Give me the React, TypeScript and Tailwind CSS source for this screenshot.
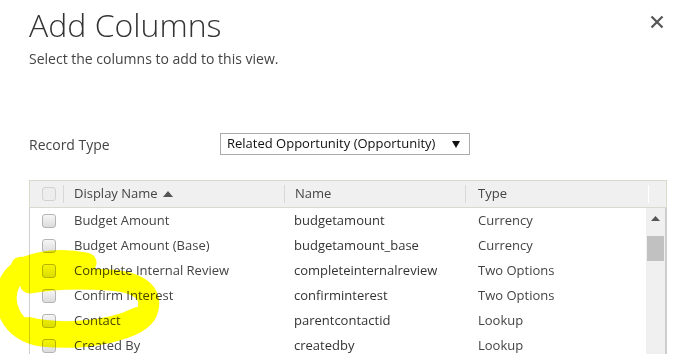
import React from "react";

type Row = { display: string; name: string; type: string };

const rows: Row[] = [
  { display: "Budget Amount", name: "budgetamount", type: "Currency" },
  { display: "Budget Amount (Base)", name: "budgetamount_base", type: "Currency" },
  { display: "Complete Internal Review", name: "completeinternalreview", type: "Two Options" },
  { display: "Confirm Interest", name: "confirminterest", type: "Two Options" },
  { display: "Contact", name: "parentcontactid", type: "Lookup" },
  { display: "Created By", name: "createdby", type: "Lookup" },
];

function Checkbox({ faded = false }: { faded?: boolean }) {
  return (
    <span
      className={`block h-[14px] w-[14px] rounded-[3px] border ${
        faded
          ? "border-[#d2d2d2] bg-[#ededed]"
          : "border-[#b4b4b4] bg-gradient-to-b from-[#f6f6f6] to-[#dcdcdc]"
      }`}
    />
  );
}

function Sep() {
  return <span className="h-[18px] w-px shrink-0 bg-[#d8d8d8]" />;
}

export default function App() {
  return (
    <div className="relative h-[354px] w-[697px] overflow-hidden bg-white font-['Open_Sans',sans-serif] text-[#444]">
      <div className="flex justify-between pl-[29px] pr-[33px]">
        <div>
          <h1 className="mt-[4px] text-[32px] font-light leading-[42px] text-[#333]">Add Columns</h1>
          <p className="mt-[3px] text-[14px] leading-[19px] text-[#444]">
            Select the columns to add to this view.
          </p>
        </div>
        <button className="mt-[15px] h-[14px] w-[14px]" aria-label="Close">
          <svg viewBox="0 0 14 14" className="h-[14px] w-[14px]">
            <path d="M1.5 1.5L12.5 12.5M12.5 1.5L1.5 12.5" stroke="#555" strokeWidth="2.2" />
          </svg>
        </button>
      </div>

      <div className="mt-[65px] flex items-center pl-[29px]">
        <span className="w-[191px] text-[14px]">Record Type</span>
        <div className="flex h-[22px] w-[250px] items-center justify-between border border-[#ababab] pl-[6px] pr-[9px] text-[13px] text-[#111]">
          <span>Related Opportunity (Opportunity)</span>
          <svg viewBox="0 0 8 7" className="h-[7px] w-[8px]">
            <path d="M0 0H8L4 7Z" fill="#111" />
          </svg>
        </div>
      </div>

      <div className="ml-[29px] mt-[25px] w-[638px]">
        <div className="flex h-[28px] items-center border border-[#d9d9cc] bg-[#f0f0f0] text-[13px]">
          <div className="flex w-[33px] items-center pl-[12px]">
            <Checkbox faded />
          </div>
          <Sep />
          <div className="flex w-[220px] items-center gap-[5px] pl-[10px]">
            <span>Display Name</span>
            <svg viewBox="0 0 10 6" className="h-[6px] w-[10px]">
              <path d="M0 6L5 0L10 6Z" fill="#555" />
            </svg>
          </div>
          <Sep />
          <div className="w-[180px] pl-[10px]">Name</div>
          <Sep />
          <div className="w-[182px] pl-[12px]">Type</div>
          <span className="h-[18px] w-px shrink-0 bg-white" />
        </div>

        <div className="flex border-l border-[#cfcfcf]">
          <div className="flex-1">
            {rows.map((r) => (
              <div key={r.name} className="flex h-[25px] items-center text-[13px]">
                <div className="w-[33px] pl-[12px]">
                  <Checkbox />
                </div>
                <div className="w-[221px] pl-[11px]">{r.display}</div>
                <div className="w-[181px] pl-[10px] text-[#333]">{r.name}</div>
                <div className="pl-[13px]">{r.type}</div>
              </div>
            ))}
          </div>
          <div className="flex w-[21px] flex-col items-center border-r-2 border-[#cdcdcd] bg-[#f0f0f0]">
            <svg viewBox="0 0 9 5" className="mt-[8px] h-[5px] w-[9px]">
              <path d="M0 5L4.5 0L9 5Z" fill="#555" />
            </svg>
            <div className="mt-[15px] h-[25px] w-[17px] bg-[#c1c1c1]" />
          </div>
        </div>
      </div>

      <svg className="pointer-events-none absolute left-0 top-0 mix-blend-multiply" width="697" height="354">
        <g fill="none" stroke="#ffff00" strokeLinecap="round" strokeLinejoin="round">
          <path
            d="M86 263 C55 257 20 262 10 282 C0 302 10 332 42 336 C85 341 140 330 147 312 C154 294 140 282 110 280 C80 278 50 279 30 283"
            strokeWidth="21"
          />
          <path d="M28 328 C60 336 110 332 138 318" strokeWidth="22" />
          <path d="M20 266 C40 264 60 266 70 272" strokeWidth="18" />
        </g>
      </svg>
    </div>
  );
}
